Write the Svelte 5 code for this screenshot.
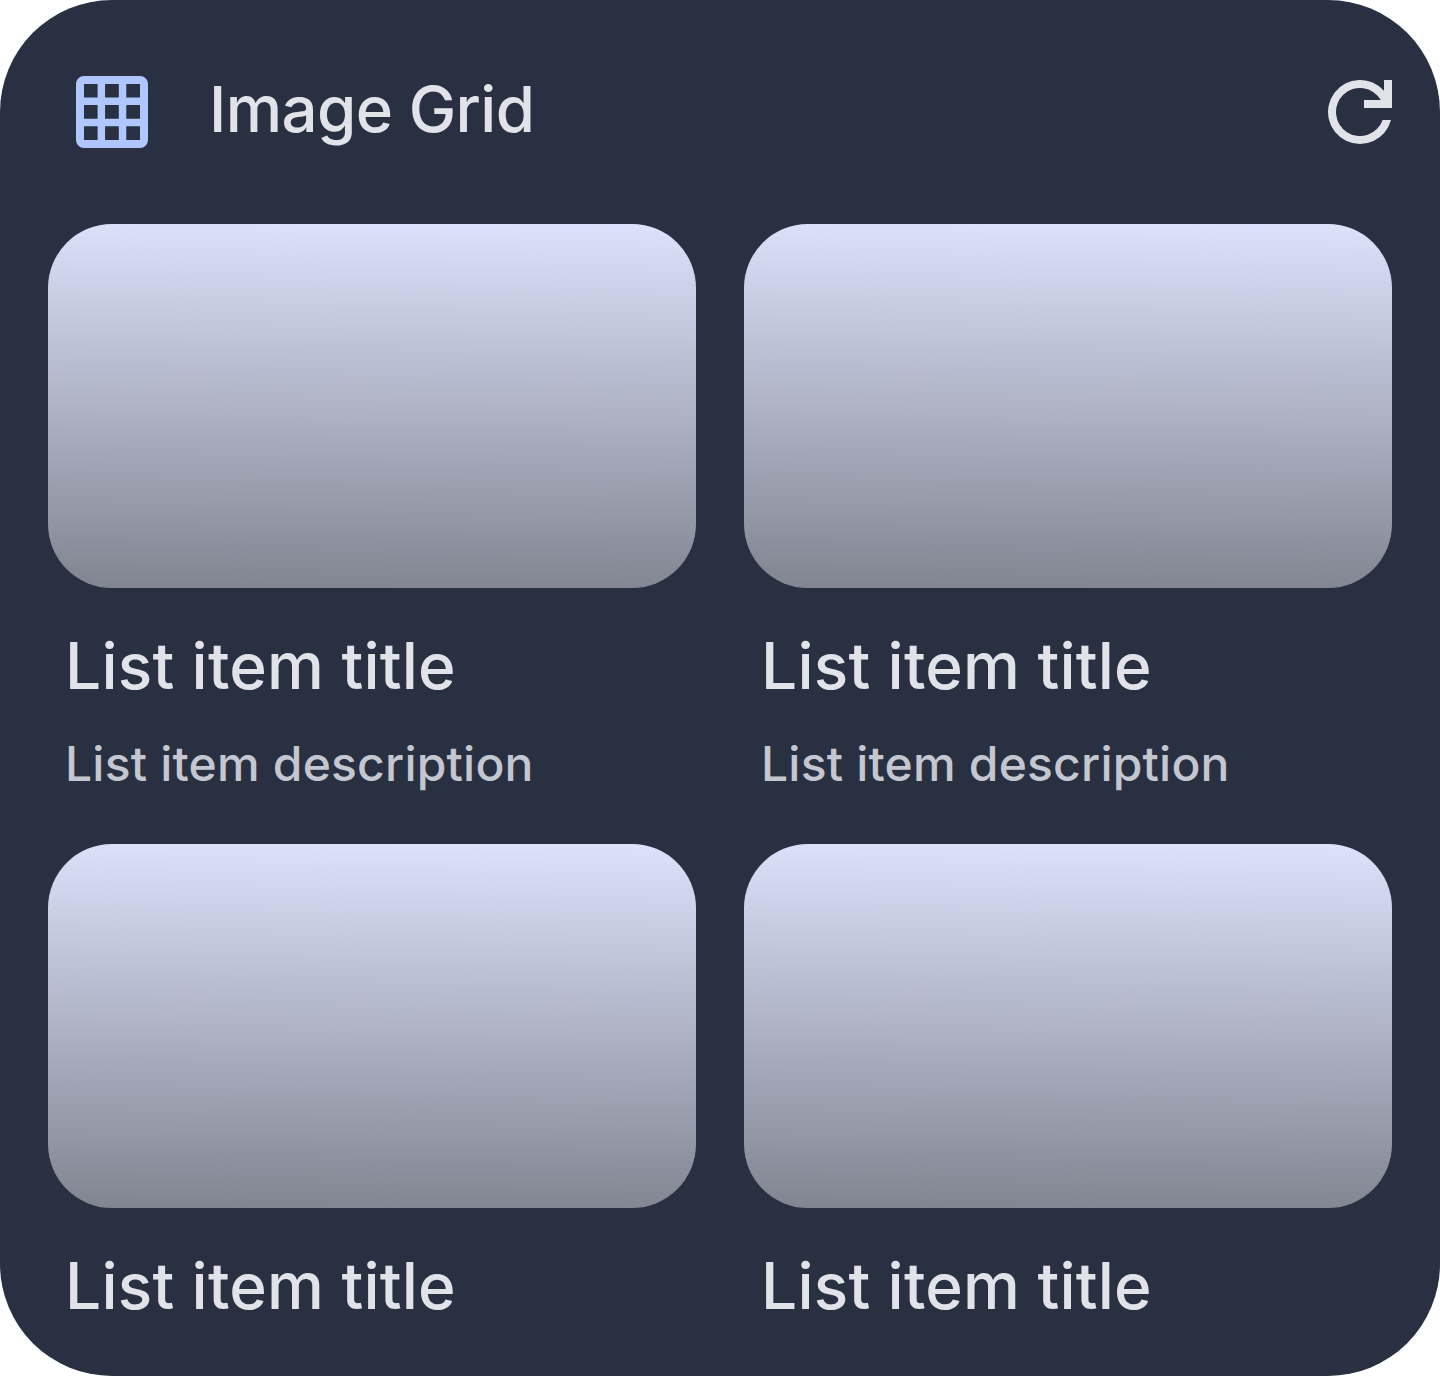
<script>
  const items = [
    { title: 'List item title', description: 'List item description' },
    { title: 'List item title', description: 'List item description' },
    { title: 'List item title' },
    { title: 'List item title' }
  ];
</script>

<main class="widget">
  <header>
    <svg class="grid-icon" viewBox="0 0 24 24" aria-hidden="true">
      <path fill-rule="evenodd" d="M5 3H19A2 2 0 0 1 21 5V19A2 2 0 0 1 19 21H5A2 2 0 0 1 3 19V5A2 2 0 0 1 5 3ZM5 5V8.4H8.4V5ZM10.27 5V8.4H13.7V5ZM15.57 5V8.4H19V5ZM5 10.27V13.7H8.4V10.27ZM10.27 10.27V13.7H13.7V10.27ZM15.57 10.27V13.7H19V10.27ZM5 15.57V19H8.4V15.57ZM10.27 15.57V19H13.7V15.57ZM15.57 15.57V19H19V15.57Z" />
    </svg>
    <h1>Image Grid</h1>
    <svg class="refresh-icon" viewBox="0 0 16 16" aria-hidden="true">
      <path d="M14 2.7A8 8 0 1 0 15.75 10H13.66A6 6 0 1 1 13.2 5H9V7H16V0H14Z" />
    </svg>
  </header>
  <section class="grid">
    {#each items as item}
      <article>
        <div class="image"></div>
        <h2>{item.title}</h2>
        {#if item.description}
          <p>{item.description}</p>
        {/if}
      </article>
    {/each}
  </section>
</main>

<style>
  :global(body) {
    background: #fff;
  }
  .widget {
    box-sizing: border-box;
    width: 1440px;
    height: 1376px;
    overflow: hidden;
    border-radius: 112px;
    background: #293042;
    color: #e2e2e9;
    font-family: Inter, 'Liberation Sans', sans-serif;
  }
  header {
    box-sizing: border-box;
    height: 224px;
    padding: 0 48px 0 64px;
    display: flex;
    align-items: center;
  }
  .grid-icon {
    width: 96px;
    height: 96px;
    fill: #b0c6ff;
  }
  h1 {
    margin: 0 0 6px 49px;
    flex: 1;
    font-size: 63.5px;
    line-height: 80px;
    font-weight: 475;
    letter-spacing: -0.6px;
  }
  .refresh-icon {
    width: 64px;
    height: 64px;
    fill: #e2e2e9;
  }
  .grid {
    padding: 0 48px;
    display: grid;
    grid-template-columns: 648px 648px;
    column-gap: 48px;
    grid-auto-rows: 620.4px;
  }
  .image {
    height: 364px;
    border-radius: 64px;
    background: linear-gradient(180.6deg, #dce2fb 0%, #818591 100%);
  }
  h2 {
    margin: 38px 0 0 17px;
    font-size: 64px;
    line-height: 80px;
    font-weight: 500;
    letter-spacing: 0.2px;
    white-space: nowrap;
  }
  p {
    margin: 26px 0 0 17px;
    color: #c4c6d0;
    font-size: 48px;
    line-height: 64px;
    font-weight: 450;
    letter-spacing: 0.2px;
    white-space: nowrap;
  }
</style>
